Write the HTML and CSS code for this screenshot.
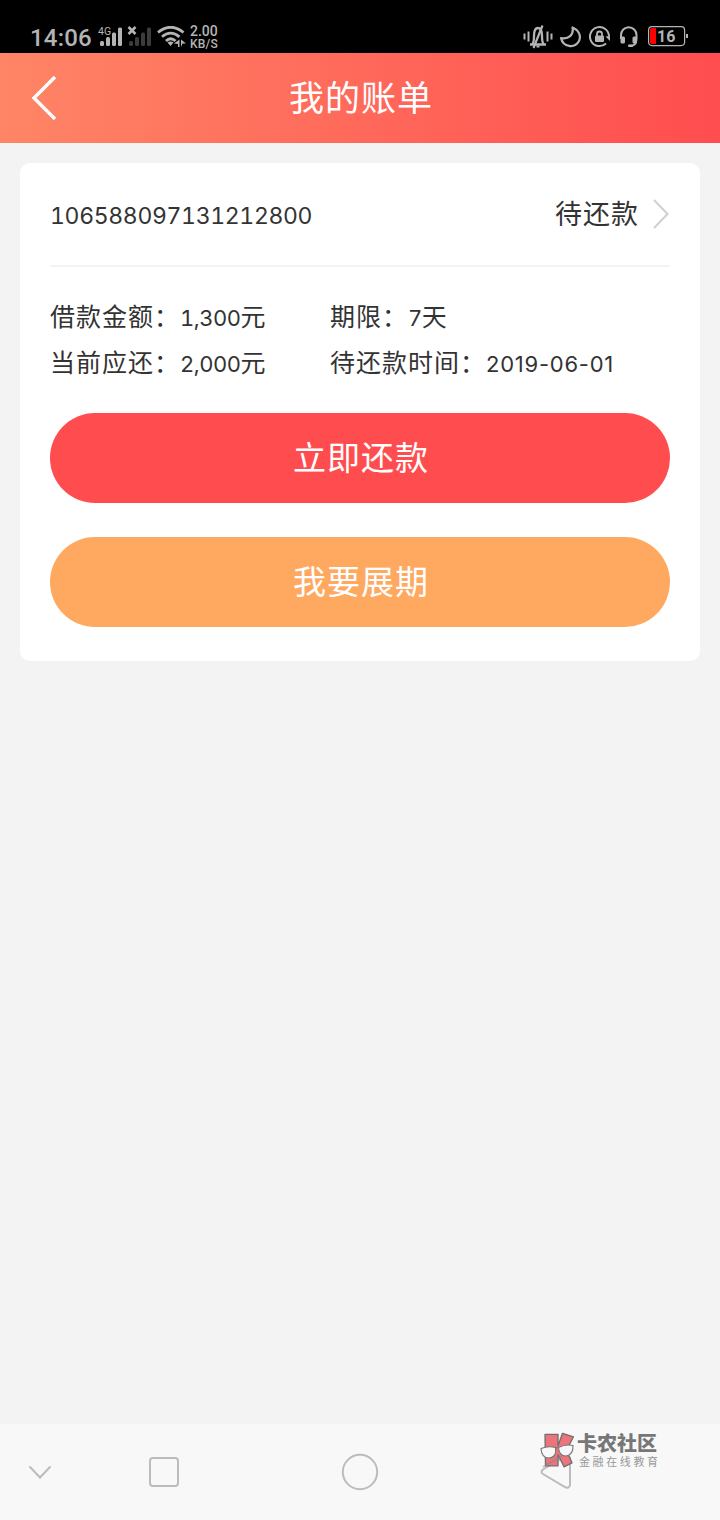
FILE: index.html
```html
<!DOCTYPE html>
<html lang="zh-CN">
<head>
  <meta charset="UTF-8" />
  <meta name="viewport" content="width=device-width, initial-scale=1.0"/>
  <title>我的账单</title>
  <link rel="stylesheet" href="styles.css">
</head>
<body>
  <div class="status-bar">
    <div class="status-left">
      <span class="clock">14:06</span>
      <svg class="signals" width="54" height="22" viewBox="98 26 54 22">
        <text x="98" y="35" class="net">4G</text>
        <g fill="#b4b4b4">
          <rect x="100" y="41" width="4" height="5" rx="1.5"/>
          <rect x="106" y="37" width="4" height="9" rx="1.5"/>
          <rect x="112" y="32.5" width="4" height="13.5" rx="1.5"/>
          <rect x="118" y="27.5" width="4" height="18.5" rx="1.5"/>
        </g>
        <g fill="#3c3c3c">
          <rect x="129" y="41" width="4" height="5" rx="1.5"/>
          <rect x="135" y="37" width="4" height="9" rx="1.5"/>
          <rect x="141" y="32.5" width="4" height="13.5" rx="1.5"/>
          <rect x="147" y="27.5" width="4" height="18.5" rx="1.5"/>
        </g>
        <path d="M128.500 27l7 7M135.500 27l-7 7" stroke="#b4b4b4" stroke-width="2.6"/>
      </svg>
      <svg class="wifi" width="30" height="22" viewBox="157 26 30 22">
        <g fill="none" stroke="#b4b4b4" stroke-width="2.8">
          <path d="M158 32.500Q170.500 22 183.500 32.500"/>
          <path d="M162 36.800Q170.500 29.500 179.500 36.800"/>
          <path d="M166 41Q170.500 36.500 175.500 41"/>
        </g>
        <path d="M167.500 42.500q3-2 6 0l-3 3.500zM174 43.500l5.500-4v7.500h-1.500v-3zM181 39.500l5 4-3.500 0-1.500 3.500z" fill="#b4b4b4"/>
      </svg>
      <div class="speed"><span>2.00</span><span class="unit">KB/S</span></div>
    </div>
    <div class="status-right">
      <svg width="31" height="24" viewBox="523 24.500 31 24" fill="none" stroke="#b4b4b4" stroke-width="2">
        <path d="M525.500 33v6M529.500 31v10M548.500 31v10M552.500 33v6"/>
        <path d="M531 44h16M533.500 43.500q1.500-2 1.500-8 0-8 4-8t4 8q0 6 1.500 8" stroke-width="2.300"/>
        <path d="M543.500 25L534.500 47.500" stroke-width="2.200"/>
        <path d="M537.500 46h3"/>
      </svg>
      <svg width="23" height="24" viewBox="559 25 23 24">
        <path d="M572.500 27.500c1.500 7.500-4 12-11.500 10.500 2 9 13.500 11 18 3 2.500-5.500-.5-11-6.500-13.500z" fill="none" stroke="#b4b4b4" stroke-width="2.200" stroke-linejoin="round"/>
      </svg>
      <svg width="23" height="24" viewBox="588 25 23 24">
        <path d="M606 43.500a9.500 9.500 0 1 1 3-7" fill="none" stroke="#b4b4b4" stroke-width="2"/>
        <path d="M605.500 36.500l4.500-.5v5z" fill="#b4b4b4"/>
        <rect x="595" y="35.500" width="9" height="6.500" rx="1" fill="#b4b4b4"/>
        <path d="M597 36v-2q0-2.500 2.500-2.500t2.500 2.500v2" fill="none" stroke="#b4b4b4" stroke-width="1.800"/>
      </svg>
      <svg width="20" height="24" viewBox="619 25 20 24">
        <path d="M621 39v-4a7.600 7.600 0 0 1 15.500 0v4q0 7-7 7" fill="none" stroke="#b4b4b4" stroke-width="2"/>
        <rect x="620.500" y="36.500" width="4.500" height="7" rx="1.500" fill="#b4b4b4"/>
        <rect x="632.500" y="36.500" width="4.500" height="7" rx="1.500" fill="#b4b4b4"/>
        <rect x="628" y="44.500" width="5" height="2.500" rx="1" fill="#b4b4b4"/>
      </svg>
      <svg width="41" height="24" viewBox="648 25 41 24">
        <rect x="648.600" y="26.600" width="36" height="19" rx="3.500" fill="none" stroke="#b4b4b4" stroke-width="1.200"/>
        <path d="M652 28h4v16h-4q-2 0-2-2V30q0-2 2-2z" fill="#ff0000"/>
        <rect x="686" y="34" width="2" height="4" fill="#b4b4b4"/>
        <text x="657" y="42" class="battery">16</text>
      </svg>
    </div>
  </div>

  <header class="header">
    <svg class="back" width="26" height="46" viewBox="0 0 26 46">
      <path d="M24 2L3 23l21 21" fill="none" stroke="#fff" stroke-width="3.400"/>
    </svg>
    <h1>我的账单</h1>
  </header>

  <main class="content">
    <section class="card">
      <div class="card-head">
        <span class="order-no">106588097131212800</span>
        <span class="state">待还款</span>
        <svg width="18" height="32" viewBox="0 0 18 32">
          <path d="M2 2l13.500 14L2 30" fill="none" stroke="#d2d2d2" stroke-width="2.200"/>
        </svg>
      </div>
      <div class="info">
        <p>借款金额：<b>1,300</b>元</p>
        <p>期限：<b>7</b>天</p>
        <p>当前应还：<b>2,000</b>元</p>
        <p>待还款时间：<b class="date">2019-06-01</b></p>
      </div>
      <button class="btn btn-pay">立即还款</button>
      <button class="btn btn-extend">我要展期</button>
    </section>
  </main>

  <nav class="nav-bar">
    <svg width="40" height="40" viewBox="0 0 40 40"><path d="M10 15l10 10.500L30 15"/></svg>
    <svg width="40" height="40" viewBox="0 0 40 40"><rect x="6" y="6" width="28" height="28" rx="3"/></svg>
    <svg width="40" height="40" viewBox="0 0 40 40"><circle cx="20" cy="20" r="17.200"/></svg>
    <svg width="40" height="40" viewBox="0 0 40 40"><path d="M34 7v26q-1 4-5 2L7 22q-3-2 0-4.500L30 4q4-1 4 3z"/></svg>
    <div class="watermark">
      <svg width="36" height="38" viewBox="540 1431 36 38">
        <path d="M545 1434.300h13v11.500l4.500-12.500 11 3.500-7 13.500 5.500 12.500-8 4-6-12v11h-12.500z" fill="#ec747c" stroke="#6f6f6f" stroke-width="1.300" stroke-linejoin="round"/>
        <path d="M543 1467l22-13" stroke="#888" stroke-width="1.800" opacity=".5"/>
        <g fill="#f8f8f8" stroke="#777" stroke-width="1.100">
          <path d="M541 1448.500q7-3 14.500-1 1.500 10-6.500 10.500-7.500 0-8-9.500z"/>
          <path d="M558.500 1447.500q7-3.500 14.500-2 .5 9.500-7 10.500-7 0-7.500-8.500z"/>
        </g>
        <path d="M555.500 1448l3-.5" stroke="#777" stroke-width="1.200"/>
      </svg>
      <div class="brand"><strong>卡农社区</strong><small>金融在线教育</small></div>
    </div>
  </nav>
</body>
</html>
```
FILE: styles.css
```css
* {
  box-sizing: border-box;
}
body {
  margin: 0;
  height: 1520px;
  display: flex;
  flex-direction: column;
  background: #f3f3f3;
  color: #333;
  font-family: "Open Sans", "Noto Sans CJK SC", sans-serif;
}
svg {
  display: block;
  flex: none;
}

/* status bar */
.status-bar {
  height: 53px;
  padding: 20px 31px 0 30px;
  display: flex;
  justify-content: space-between;
  background: #000;
  color: #b4b4b4;
  font-family: Roboto, sans-serif;
}
.status-left,
.status-right {
  height: 33px;
  display: flex;
  align-items: center;
}
.status-right {
  gap: 6px;
}
.status-right svg:nth-child(4) {
  margin: 0 3px 0 2px;
}
.clock {
  width: 68px;
  font-size: 24px;
  font-weight: 500;
  letter-spacing: 0.2px;
  line-height: 33px;
  padding-top: 3px;
}
.net {
  font-size: 10.5px;
  fill: #b4b4b4;
}
.wifi {
  margin-left: 5px;
}
.speed {
  margin: 2px 0 0 3px;
  display: flex;
  flex-direction: column;
  font-size: 14px;
  font-weight: 500;
  line-height: 13px;
}
.speed .unit {
  font-size: 12px;
  line-height: 12px;
  letter-spacing: 0.2px;
}
.battery {
  font-size: 16px;
  font-weight: 700;
  fill: #b4b4b4;
}

/* title bar */
.header {
  height: 90px;
  padding: 0 31px;
  display: flex;
  align-items: center;
  background: linear-gradient(90deg, #ff8566 0%, #ff4d4f 100%);
}
.header h1 {
  flex: 1;
  margin: 0 24px 0 0;
  text-align: center;
  font-size: 35px;
  font-weight: 400;
  letter-spacing: 1px;
  line-height: 90px;
  color: #fff;
}

/* bill card */
.content {
  flex: 1;
  padding: 20px;
}
.card {
  height: 498px;
  padding: 0 30px;
  border-radius: 10px;
  background: #fff;
}
.card-head {
  height: 104px;
  display: flex;
  align-items: center;
  border-bottom: 2px solid #f3f3f3;
}
.order-no {
  flex: 1;
  padding-top: 3px;
  font-family: Inter, sans-serif;
  font-size: 23px;
  font-variant-numeric: tabular-nums;
  letter-spacing: -0.35px;
}
.state {
  margin-right: 13px;
  font-size: 27px;
  letter-spacing: 1px;
  line-height: 36px;
}
.info {
  height: 146px;
  display: grid;
  grid-template-columns: 280px 1fr;
  grid-auto-rows: 46px;
  padding-top: 26px;
}
.info p {
  margin: 0;
  font-size: 25px;
  line-height: 46px;
  letter-spacing: 1px;
  white-space: nowrap;
}
.info b {
  font-family: Inter, sans-serif;
  font-size: 22px;
  font-weight: 400;
  font-variant-numeric: tabular-nums;
  letter-spacing: -0.5px;
  line-height: 1;
}
.info .date {
  font-variant-numeric: normal;
  letter-spacing: 0.75px;
}
.btn {
  display: block;
  width: 100%;
  height: 90px;
  padding: 0 0 5px 2px;
  border: none;
  border-radius: 45px;
  color: #fff;
  font-family: inherit;
  font-size: 33px;
  letter-spacing: 1px;
}
.btn-pay {
  background: #ff4d4f;
}
.btn-extend {
  margin-top: 34px;
  background: #ffa85f;
}

/* system navigation */
.nav-bar {
  position: relative;
  height: 96px;
  padding: 0 144px 0 20px;
  display: flex;
  align-items: center;
  justify-content: space-between;
  background: #f8f8f8;
}
.nav-bar > svg {
  fill: none;
  stroke: #bcbcbc;
  stroke-width: 2;
  stroke-linecap: round;
}
.nav-bar > svg:first-child {
  margin-right: -72px;
}
.watermark {
  position: absolute;
  left: 540px;
  top: 7px;
  display: flex;
}
.brand {
  display: flex;
  flex-direction: column;
  margin-left: 1px;
}
.brand strong {
  font-size: 20px;
  line-height: 25px;
  font-weight: 900;
  color: #777;
}
.brand small {
  margin-left: 2px;
  font-size: 11px;
  line-height: 11px;
  letter-spacing: 2.6px;
  color: #999;
}
```
